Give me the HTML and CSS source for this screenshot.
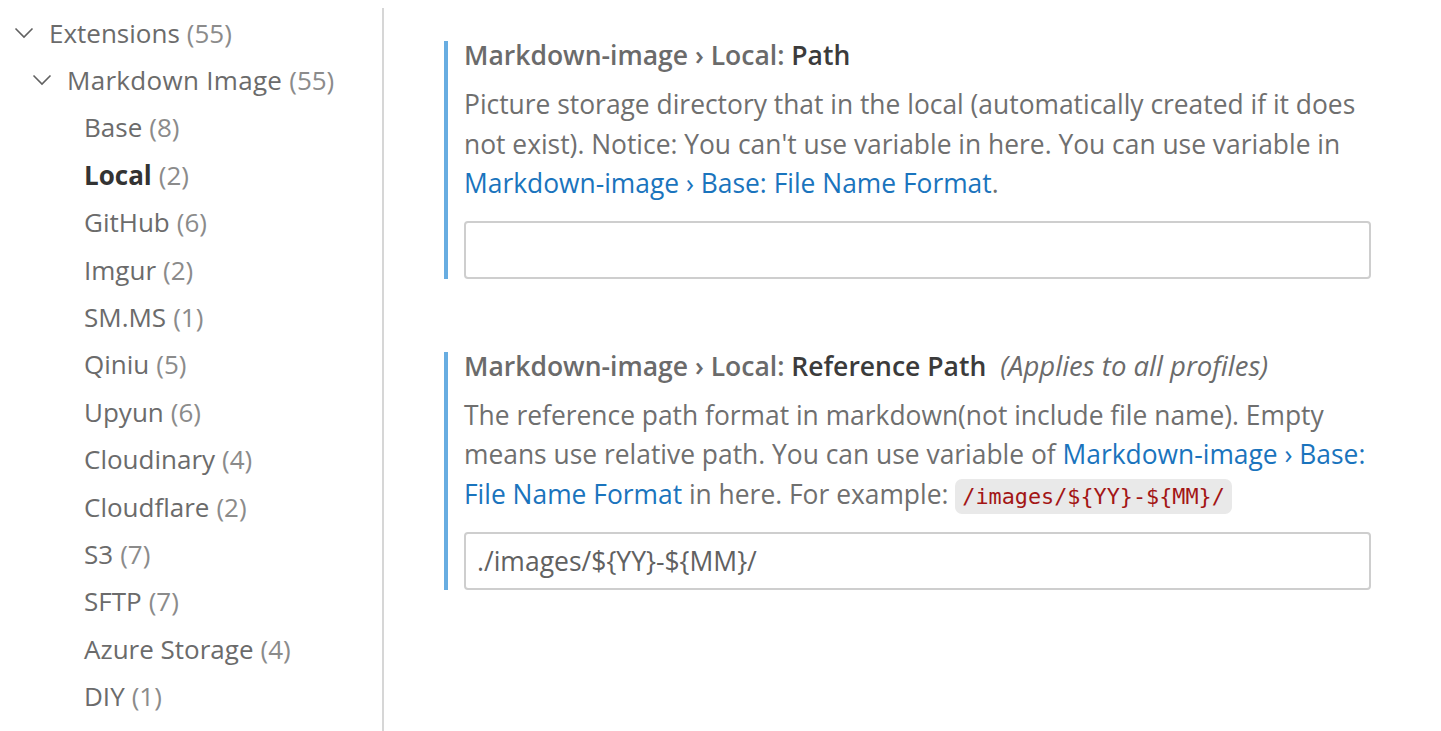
FILE: index.html
```html
<!DOCTYPE html>
<html>
<head>
<meta charset="utf-8">
<link rel="stylesheet" href="styles.css">
</head>
<body>
<div class="layout">
  <nav class="toc">
    <div class="row lvl1"><svg class="chev" viewBox="0 0 20 12"><path d="M1.5 1.5 L10 10 L18.5 1.5" /></svg><span class="name">Extensions</span><span class="count">(55)</span></div>
    <div class="row lvl2"><svg class="chev" viewBox="0 0 20 12"><path d="M1.5 1.5 L10 10 L18.5 1.5" /></svg><span class="name">Markdown Image</span><span class="count">(55)</span></div>
    <div class="row lvl3"><span class="name">Base</span><span class="count">(8)</span></div>
    <div class="row lvl3 active"><span class="name">Local</span><span class="count">(2)</span></div>
    <div class="row lvl3"><span class="name">GitHub</span><span class="count">(6)</span></div>
    <div class="row lvl3"><span class="name">Imgur</span><span class="count">(2)</span></div>
    <div class="row lvl3"><span class="name">SM.MS</span><span class="count">(1)</span></div>
    <div class="row lvl3"><span class="name">Qiniu</span><span class="count">(5)</span></div>
    <div class="row lvl3"><span class="name">Upyun</span><span class="count">(6)</span></div>
    <div class="row lvl3"><span class="name">Cloudinary</span><span class="count">(4)</span></div>
    <div class="row lvl3"><span class="name">Cloudflare</span><span class="count">(2)</span></div>
    <div class="row lvl3"><span class="name">S3</span><span class="count">(7)</span></div>
    <div class="row lvl3"><span class="name">SFTP</span><span class="count">(7)</span></div>
    <div class="row lvl3"><span class="name">Azure Storage</span><span class="count">(4)</span></div>
    <div class="row lvl3"><span class="name">DIY</span><span class="count">(1)</span></div>
  </nav>
  <main class="settings">
    <section class="setting">
      <div class="title"><span class="cat">Markdown-image › Local: </span><span class="label">Path</span></div>
      <div class="desc">Picture storage directory that in the local (automatically created if it does not exist). Notice: You can't use variable in here. You can use variable in <a class="link">Markdown-image › Base: File Name Format</a>.</div>
      <div class="input"></div>
    </section>
    <section class="setting">
      <div class="title"><span class="cat">Markdown-image › Local: </span><span class="label">Reference Path</span><span class="scope">(Applies to all profiles)</span></div>
      <div class="desc">The reference path format in markdown(not include file name). Empty means use relative path. You can use variable of <a class="link">Markdown-image › Base: File Name Format</a> in here. For example: <code class="code">/images/${YY}-${MM}/</code></div>
      <div class="input">./images/${YY}-${MM}/</div>
    </section>
  </main>
</div>
</body>
</html>
```

FILE: styles.css
```css
html, body {
  margin: 0;
  padding: 0;
  background: #ffffff;
}
body {
  font-family: "Open Sans", "Noto Sans", sans-serif;
  font-size: 26px;
  color: #616161;
}
.layout {
  display: flex;
  height: 731px;
  overflow: hidden;
}
.toc {
  flex: none;
  width: 384px;
  margin-top: 8px;
  padding-top: 1px;
  border-right: 2px solid #d6d6d6;
  box-sizing: border-box;
}
.row {
  height: 47.4px;
  display: flex;
  align-items: center;
  white-space: nowrap;
}
.chev {
  width: 20px;
  height: 12px;
  margin-right: 15px;
  fill: none;
  stroke: #616161;
  stroke-width: 1.6;
}
.lvl1 { padding-left: 14px; }
.lvl2 { padding-left: 32px; }
.lvl3 { padding-left: 84px; }
.name { color: #6b6b6b; }
.count { color: #8b8b8b; margin-left: 7px; }
.lvl2 .name { letter-spacing: 0.3px; }
.active .name { color: #333333; font-weight: 700; }
.settings {
  flex: 1;
  padding: 41px 70px 0 60px;
}
.setting {
  border-left: 4px solid #68ade1;
  padding-left: 16px;
  margin-bottom: 73px;
}
.title {
  font-weight: 600;
  font-size: 26.5px;
  line-height: 28px;
  height: 28px;
  white-space: nowrap;
}
.cat { color: #6b6b6b; }
.label { color: #3b3b3b; }
.scope {
  font-style: italic;
  font-weight: 400;
  font-size: 27.5px;
  color: #6b6b6b;
  margin-left: 14px;
}
.desc {
  margin-top: 16px;
  font-size: 26.4px;
  line-height: 39.6px;
  color: #6f6f6f;
}
.link {
  color: #1a74bd;
  text-decoration: none;
}
.code {
  font-family: "DejaVu Sans Mono", monospace;
  font-size: 21.8px;
  line-height: 1;
  color: #a31515;
  background: #e9e9e9;
  border-radius: 7px;
  padding: 5px 7px;
}
.input {
  margin-top: 17px;
  height: 58px;
  box-sizing: border-box;
  border: 2px solid #cecece;
  border-radius: 4px;
  padding-left: 11px;
  font-size: 26.5px;
  line-height: 54px;
  color: #616161;
}
```
